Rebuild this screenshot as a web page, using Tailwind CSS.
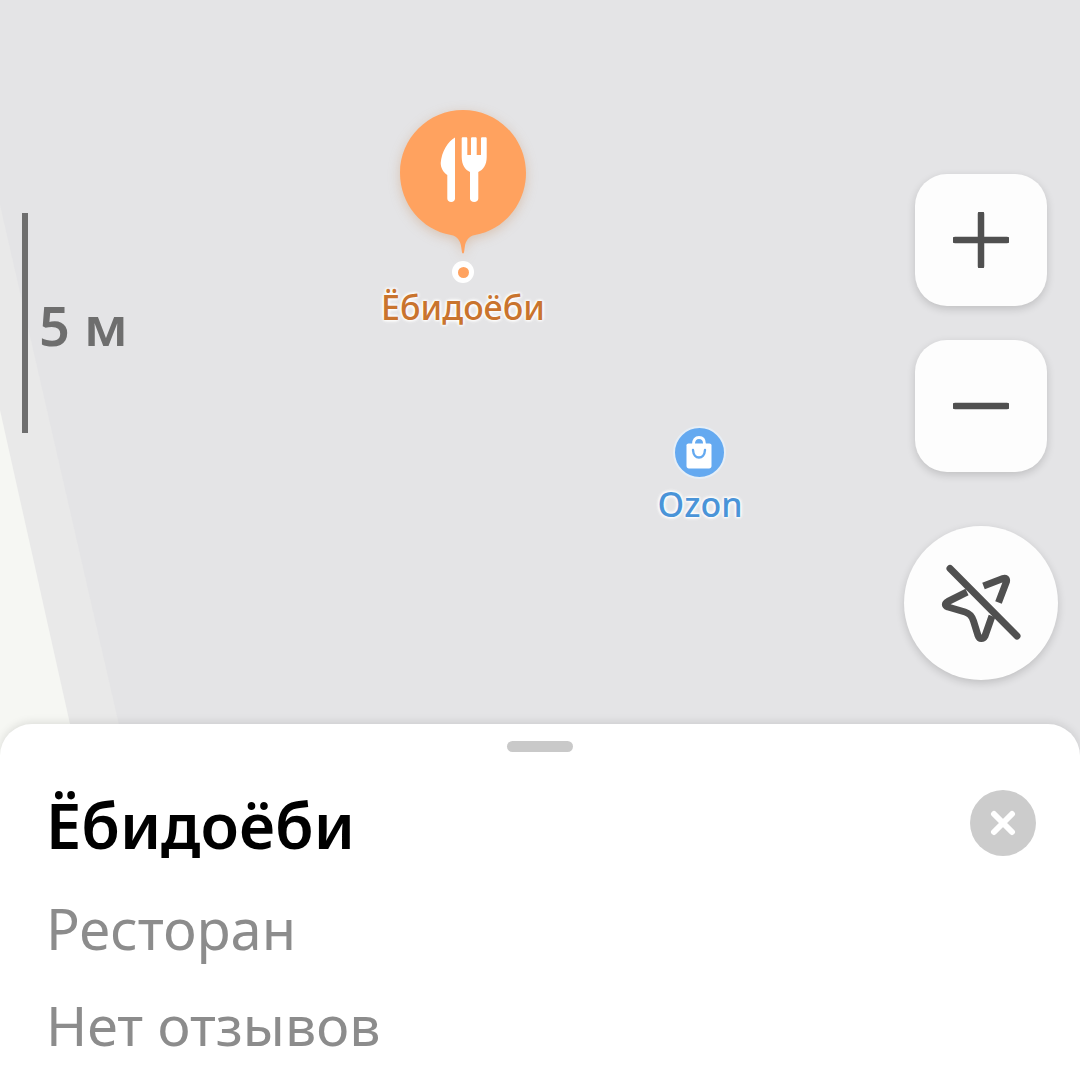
<!DOCTYPE html>
<html lang="ru">
<head>
  <meta charset="UTF-8">
  <meta name="viewport" content="width=device-width, initial-scale=1.0">
  <title>Ёбидоёби</title>
  <script src="https://cdn.jsdelivr.net/npm/@tailwindcss/browser@4"></script>
</head>
<body class="bg-white overflow-hidden font-['Noto_Sans',sans-serif]">
  <div class="relative w-[1080px] h-[1066px] overflow-hidden flex flex-col justify-end bg-[#e4e4e6]">

    <!-- map background -->
    <svg class="absolute left-0 top-0" width="1080" height="760" viewBox="0 0 1080 760">
      <polygon points="0,205 127,760 0,760" fill="#e9e9e9"/>
      <polygon points="0,410 78,760 0,760" fill="#f6f7f3"/>
    </svg>

    <!-- scale -->
    <div class="absolute left-[22px] top-[213px] w-[6px] h-[220px] bg-[#6e6e6e]"></div>
    <div class="absolute left-[39px] top-[288px] text-[54px] leading-[74px] font-semibold text-[#6e6e6e]">5 м</div>

    <!-- restaurant pin -->
    <div class="absolute left-[363px] top-[110px] w-[200px] flex flex-col items-center">
      <svg class="drop-shadow-[0_3px_6px_rgba(190,120,60,0.3)]" width="126" height="144" viewBox="0 0 126 144">
        <path d="M63 0C97.8 0 126 28.2 126 63C126 94 104 120 75 125C68.5 126.2 65.5 131 64.8 137L64 142.5Q63 144.5 62 142.5L61.2 137C60.5 131 57.5 126.2 51 125C22 120 0 94 0 63C0 28.2 28.2 0 63 0Z" fill="#ffa25f"/>
        <path d="M55 27.5C48 31 41.5 42 40.7 53C40.7 58 43.5 62.5 47.3 65V88.5C47.3 90.5 49 92 51.2 92C53.4 92 55 90.5 55 88.5Z" fill="#fff"/>
        <path d="M63 27.3H66C66.8 27.3 67.3 27.8 67.3 28.6V45H71V28.6C71 27.8 71.5 27.3 72.3 27.3H75.4C76.2 27.3 76.7 27.8 76.7 28.6V45H81V28.6C81 27.8 81.5 27.3 82.3 27.3H85.4C86.2 27.3 86.7 27.8 86.7 28.6V47C86.7 55 83 60 78.3 62V88.5C78.3 90.5 76.5 92 74.2 92C71.8 92 70 90.5 70 88.5V62C65.4 60 61.7 55 61.7 47V28.6C61.7 27.8 62.2 27.3 63 27.3Z" fill="#fff"/>
      </svg>
      <div class="mt-[7px] w-[22px] h-[22px] rounded-full bg-white flex items-center justify-center">
        <div class="w-[11px] h-[11px] rounded-full bg-[#ffa25f]"></div>
      </div>
      <div class="mt-[1px] text-[34px] leading-[46px] font-medium text-[#c9742e] [text-shadow:0_0_3px_#fff,0_0_3px_#fff,0_0_4px_#fff,0_0_4px_#fff]">Ёбидоёби</div>
    </div>

    <!-- ozon pin -->
    <div class="absolute left-[640px] top-[426px] w-[120px] flex flex-col items-center">
      <div class="ml-[-2px] w-[53px] h-[53px] rounded-full bg-[#64a9f0] border-[2px] border-[#e6eef6] flex items-center justify-center">
        <svg width="30" height="34" viewBox="0 0 30 34">
          <path d="M4.5 7.5H25.5C26.6 7.5 27.5 8.3 27.5 9.2V30C27.5 31.4 26.5 32.5 25.1 32.5H4.9C3.5 32.5 2.5 31.4 2.5 30V9.2C2.5 8.3 3.4 7.5 4.5 7.5Z" fill="#fff"/>
          <path d="M9.5 8C9.5 4 11.5 1.5 15 1.5C18.5 1.5 20.5 4 20.5 8" fill="none" stroke="#fff" stroke-width="2.8"/>
          <path d="M9 14C9.3 19 12 21.5 15 21.5C18 21.5 20.7 19 21 14" fill="none" stroke="#64a9f0" stroke-width="2.4" stroke-linecap="round"/>
        </svg>
      </div>
      <div class="mt-[2px] text-[34px] leading-[46px] font-medium text-[#4a94d8] [text-shadow:0_0_3px_#fff,0_0_3px_#fff,0_0_4px_#fff,0_0_4px_#fff]">Ozon</div>
    </div>

    <!-- map controls -->
    <div class="absolute left-[904px] top-[174px] w-[154px] flex flex-col items-center">
      <button class="w-[132px] h-[132px] rounded-[32px] bg-[#fdfdfd] shadow-[0_3px_8px_rgba(0,0,0,0.16)] flex items-center justify-center">
        <svg width="56" height="56" viewBox="0 0 56 56">
          <path d="M2 28H54M28 2V54" stroke="#505050" stroke-width="6.5" stroke-linecap="round"/>
        </svg>
      </button>
      <button class="mt-[34px] w-[132px] h-[132px] rounded-[32px] bg-[#fdfdfd] shadow-[0_3px_8px_rgba(0,0,0,0.16)] flex items-center justify-center">
        <svg width="56" height="56" viewBox="0 0 56 56">
          <path d="M2 28H54" stroke="#505050" stroke-width="6.5" stroke-linecap="round"/>
        </svg>
      </button>
      <button class="mt-[54px] w-[154px] h-[154px] rounded-full bg-[#fdfdfd] shadow-[0_3px_8px_rgba(0,0,0,0.16)] flex items-center justify-center">
        <svg width="154" height="154" viewBox="0 0 154 154">
          <path d="M46 42.5L113 110" stroke="#505050" stroke-width="7" stroke-linecap="round" fill="none"/>
          <path d="M63 66L44 75.5C40.5 77.5 40.5 79.5 44 81L61 86C66 87.5 68 90 69.5 95L74 109.5C75.5 113.5 79 113.5 81 110L88 90" stroke="#505050" stroke-width="7" stroke-linejoin="round" fill="none"/>
          <path d="M79.5 60L99 52.5C101.5 51.5 103 53 102.5 55.5L94.5 76.5" stroke="#505050" stroke-width="7" stroke-linejoin="round" fill="none"/>
        </svg>
      </button>
    </div>

    <!-- bottom sheet -->
    <div class="relative h-[342px] bg-white rounded-t-[32px] shadow-[0_-2px_8px_rgba(0,0,0,0.1)] pl-[46px] pr-[44px]">
      <div class="absolute left-[507px] top-[17px] w-[66px] h-[11px] rounded-full bg-[#c9c9c9]"></div>
      <div class="flex justify-between items-start pt-[66px]">
        <h1 class="mt-[2px] text-[63px] leading-[66px] font-semibold text-black">Ёбидоёби</h1>
        <button class="w-[66px] h-[66px] rounded-full bg-[#cccccc] flex items-center justify-center">
          <svg width="26" height="26" viewBox="0 0 26 26">
            <path d="M4 4L22 22M22 4L4 22" stroke="#fff" stroke-width="6" stroke-linecap="round"/>
          </svg>
        </button>
      </div>
      <p class="mt-[32px] text-[56px] leading-[76px] text-[#8c8c8c]">Ресторан</p>
      <p class="mt-[21px] text-[55.5px] leading-[76px] text-[#8c8c8c]">Нет отзывов</p>
    </div>
  </div>
</body>
</html>
